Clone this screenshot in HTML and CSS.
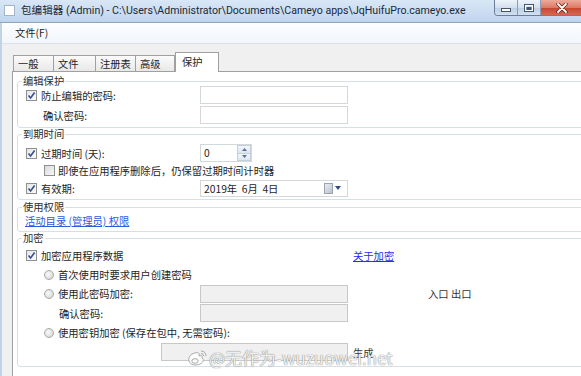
FILE: index.html
```html
<!DOCTYPE html>
<html lang="zh-CN">

<head>
    <meta charset="UTF-8">
    <meta name="viewport" content="width=device-width, initial-scale=1.0">
    <title>包编辑器</title>
    <link rel="stylesheet" href="styles.css">
</head>

<body>
    <div class="window">
        <div class="titlebar">
            <span class="app-icon"></span>
            <span class="title">包编辑器 (Admin) - C:\Users\Administrator\Documents\Cameyo apps\JqHuifuPro.cameyo.exe</span>
            <div class="caption-btns">
                <span class="cbtn min">
                    <svg width="10" height="4" viewBox="0 0 10 4"><rect x="0.5" y="0.5" width="9" height="3" fill="#fff" stroke="#44546b"/></svg>
                </span>
                <span class="cbtn max">
                    <svg width="10" height="8" viewBox="0 0 10 8"><rect x="0.5" y="0.5" width="9" height="7" fill="none" stroke="#44546b"/><rect x="1.5" y="1.5" width="7" height="5" fill="none" stroke="#fff"/><rect x="2.5" y="3" width="5" height="3" fill="#44546b"/></svg>
                </span>
                <span class="cbtn close">
                    <svg width="12" height="10" viewBox="0 0 12 10"><path d="M2 1 L10 9 M10 1 L2 9" stroke="#6b2418" stroke-width="3.4" stroke-linecap="round"/><path d="M2 1 L10 9 M10 1 L2 9" stroke="#fff" stroke-width="1.8" stroke-linecap="round"/></svg>
                </span>
            </div>
        </div>

        <div class="frame">
            <div class="menubar"><span class="menu-item">文件(F)</span></div>

            <div class="tabstrip">
                <span class="tab">一般</span>
                <span class="tab">文件</span>
                <span class="tab">注册表</span>
                <span class="tab">高级</span>
                <span class="tab active">保护</span>
            </div>

            <div class="panel">
                <!-- 编辑保护 -->
                <fieldset class="group g-edit">
                    <legend>编辑保护</legend>
                    <div class="rows">
                        <div class="row r20">
                            <label class="lbl in-check"><span class="check on"><svg width="9" height="9" viewBox="0 0 9 9"><path d="M1.5 4.5 L3.6 7 L7.6 1.5" fill="none" stroke="#3a4f86" stroke-width="1.6"/></svg></span>防止编辑的密码:</label>
                            <span class="field"></span>
                        </div>
                        <div class="row r20">
                            <label class="lbl in-sub">确认密码:</label>
                            <span class="field"></span>
                        </div>
                    </div>
                </fieldset>

                <!-- 到期时间 -->
                <fieldset class="group g-expire">
                    <legend>到期时间</legend>
                    <div class="rows">
                        <div class="row r18">
                            <label class="lbl in-check"><span class="check on"><svg width="9" height="9" viewBox="0 0 9 9"><path d="M1.5 4.5 L3.6 7 L7.6 1.5" fill="none" stroke="#3a4f86" stroke-width="1.6"/></svg></span>过期时间 (天):</label>
                            <span class="spin">
                                <span class="spin-val">0</span>
                                <span class="spin-btns">
                                    <span class="spin-btn"><svg width="5" height="3" viewBox="0 0 5 3"><path d="M0 3 L2.5 0 L5 3 Z" fill="#56739c"/></svg></span>
                                    <span class="spin-btn"><svg width="5" height="3" viewBox="0 0 5 3"><path d="M0 0 L2.5 3 L5 0 Z" fill="#56739c"/></svg></span>
                                </span>
                            </span>
                        </div>
                        <div class="row r17">
                            <label class="lbl in-sub2 wide"><span class="check"></span>即使在应用程序删除后，仍保留过期时间计时器</label>
                        </div>
                        <div class="row r18">
                            <label class="lbl in-check"><span class="check on"><svg width="9" height="9" viewBox="0 0 9 9"><path d="M1.5 4.5 L3.6 7 L7.6 1.5" fill="none" stroke="#3a4f86" stroke-width="1.6"/></svg></span>有效期:</label>
                            <span class="date">
                                <span class="date-val">2019年&nbsp;&nbsp;6月&nbsp;&nbsp;4日</span>
                                <span class="cal-icon"></span>
                                <svg class="cal-arrow" width="6" height="4" viewBox="0 0 6 4"><path d="M0 0 L6 0 L3 4 Z" fill="#2e4d7c"/></svg>
                            </span>
                        </div>
                    </div>
                </fieldset>

                <!-- 使用权限 -->
                <fieldset class="group g-perm">
                    <legend>使用权限</legend>
                    <div class="rows">
                        <div class="row r12">
                            <a class="link in-link wide" href="#">活动目录 (管理员) 权限</a>
                        </div>
                    </div>
                </fieldset>

                <!-- 加密 -->
                <fieldset class="group g-crypt">
                    <legend>加密</legend>
                    <div class="rows">
                        <div class="row r19">
                            <label class="lbl in-check"><span class="check on"><svg width="9" height="9" viewBox="0 0 9 9"><path d="M1.5 4.5 L3.6 7 L7.6 1.5" fill="none" stroke="#3a4f86" stroke-width="1.6"/></svg></span>加密应用程序数据</label>
                            <span></span>
                            <a class="aside link2" href="#">关于加密</a>
                        </div>
                        <div class="row r19">
                            <label class="lbl in-radio wide"><span class="radio"></span>首次使用时要求用户创建密码</label>
                        </div>
                        <div class="row r19">
                            <label class="lbl in-radio"><span class="radio"></span>使用此密码加密:</label>
                            <span class="field off"></span>
                            <span class="aside io">入口 出口</span>
                        </div>
                        <div class="row r20">
                            <label class="lbl in-radio-sub">确认密码:</label>
                            <span class="field off"></span>
                        </div>
                        <div class="row r19">
                            <label class="lbl in-radio wide"><span class="radio"></span>使用密钥加密 (保存在包中, 无需密码):</label>
                        </div>
                        <div class="row r20">
                            <span class="field off keybox"></span>
                            <span class="aside">生成</span>
                        </div>
                    </div>
                </fieldset>
            </div>
        </div>

        <div class="watermark">
            <svg width="20" height="18" viewBox="0 0 20 18">
                <path d="M8 4 C3 5 1 9 2 12 C3 16 9 17 13 15 C17 13 17 10 15 9 C16 7 15 6 12 7 C13 4 11 3 8 4 Z" fill="rgba(255,255,255,0.85)" stroke="#a8a8a8" stroke-width="1"/>
                <ellipse cx="8" cy="12" rx="3.2" ry="2.3" fill="none" stroke="#a8a8a8" stroke-width="1"/>
                <path d="M14 2 C17 2 19 4 19 7 M14 4.5 C15.5 4.5 16.5 5.5 16.5 7" fill="none" stroke="#a8a8a8" stroke-width="1"/>
            </svg>
            <span>@无作为-wuzuowei.net</span>
        </div>
    </div>
</body>

</html>
```

FILE: styles.css
```css
body {
    margin: 0;
    font-family: "Noto Sans CJK SC", "Noto Sans", sans-serif;
    font-size: 10.3px;
    color: #1e1e1e;
}

.window {
    position: relative;
    width: 581px;
    height: 376px;
    overflow: hidden;
    background: #f0f0f0;
}

/* title bar */
.titlebar {
    height: 22px;
    display: flex;
    align-items: flex-start;
    border-bottom: 1px solid #8fa3ba;
    background: linear-gradient(#d9e7f6, #bfd5ee);
}

.app-icon {
    flex-shrink: 0;
    width: 9px;
    height: 9px;
    margin: 5px 0 0 4px;
    background: #fff;
    border: 1px solid #a5b4c6;
}

.title {
    min-width: 0;
    overflow: hidden;
    margin: 2px 0 0 6px;
    font-family: Roboto, "Noto Sans CJK SC", sans-serif;
    font-size: 10.6px;
    line-height: 17px;
    color: #1b2838;
    white-space: nowrap;
}

.caption-btns {
    flex-shrink: 0;
    display: flex;
    height: 15px;
    margin-left: auto;
    margin-right: -3px;
    border: 1px solid #6c7e96;
    border-top: none;
    border-radius: 0 0 4px 4px;
    overflow: hidden;
}

.cbtn {
    display: flex;
    align-items: center;
    justify-content: center;
}

.cbtn.min,
.cbtn.max {
    background: linear-gradient(#edf3fa, #d3e0ee 50%, #bccee3 51%, #d2e0f0);
    border-right: 1px solid #8b9cb2;
}

.cbtn.min {
    width: 23px;
    align-items: flex-end;
    padding-bottom: 3px;
    box-sizing: border-box;
}

.cbtn.max {
    width: 22px;
}

.cbtn.close {
    width: 42px;
    background: linear-gradient(#eeaa9a, #dc7a66 50%, #c8442d 51%, #da6550);
}

/* frame below the title bar */
.frame {
    border-left: 2px solid #c1d3e7;
}

.menubar {
    height: 20px;
    border-bottom: 1px solid #dce2ea;
    background: linear-gradient(#fdfeff, #f2f5fa);
}

.menu-item {
    display: inline-block;
    padding-left: 13px;
    line-height: 20px;
}

/* tabs */
.tabstrip {
    height: 27px;
    margin-left: 10px;
    padding-left: 1px;
    display: grid;
    grid-template-columns: 41px 42px 40px 39px 44px;
    align-items: end;
    border-bottom: 1px solid #a0a0a0;
}

.tab {
    height: 15px;
    padding-left: 4px;
    line-height: 15px;
    border: 1px solid #a0a0a0;
    border-bottom: none;
    background: linear-gradient(#fbfbfb, #e8e8e8);
    white-space: nowrap;
}

.tab + .tab {
    border-left: none;
}

.tab.active {
    position: relative;
    z-index: 1;
    height: 19px;
    margin-bottom: -1px;
    padding-left: 6px;
    line-height: 18px;
    border-left: 1px solid #a0a0a0;
    background: #fff;
}

/* tab page */
.panel {
    min-height: 304px;
    margin-left: 10px;
    margin-right: -30px;
    padding: 3px 0 0 4px;
    box-sizing: border-box;
    border-left: 1px solid #a0a0a0;
    background: #fff;
}

.group {
    min-width: 0;
    margin: 0;
    padding: 0;
    border: 1px solid #d5dfe5;
    border-radius: 3px;
}

.group legend {
    margin-left: 4px;
    padding: 0 1px;
    line-height: 12px;
    color: #2c2c2c;
}

.g-edit .rows {
    margin-top: -2px;
}

.g-edit {
    padding-bottom: 2px;
}

.g-expire .rows {
    margin-top: 4px;
}

.g-expire {
    padding-bottom: 2px;
}

.g-perm {
    margin-top: 1px;
    padding-bottom: 4px;
}

.g-perm .rows {
    margin-top: 2px;
}

.g-crypt {
    padding-bottom: 4px;
}

.g-crypt .rows {
    margin-top: 2px;
}

.row {
    display: grid;
    grid-template-columns: 182px 148px auto;
    align-items: center;
}

.r12 { height: 12px; }
.r17 { height: 17px; }
.r18 { height: 18px; }
.r19 { height: 19px; }
.r20 { height: 20px; }

.lbl {
    display: flex;
    align-items: center;
    gap: 4px;
    white-space: nowrap;
}

.wide {
    grid-column: 1 / 4;
}

.in-check { padding-left: 8px; }
.in-sub { padding-left: 25px; }
.in-sub2 { padding-left: 26px; gap: 3px; }
.in-radio { padding-left: 26px; }
.in-radio-sub { padding-left: 41px; }
.in-link { padding-left: 7px; }

.check {
    width: 11px;
    height: 11px;
    box-sizing: border-box;
    display: inline-flex;
    align-items: center;
    justify-content: center;
    border: 1px solid #8e8f8f;
    background: linear-gradient(135deg, #d8dade, #f8f8f8);
}

.check.on {
    background: linear-gradient(135deg, #e4e6ea, #fbfbfb);
}

.radio {
    width: 10px;
    height: 10px;
    box-sizing: border-box;
    border-radius: 50%;
    border: 1px solid #a9a9a9;
    background: radial-gradient(circle at 40% 40%, #fafafa, #cfcfcf);
}

.field {
    height: 18px;
    box-sizing: border-box;
    border: 1px solid #d3d8dd;
    background: #fff;
}

.field.off {
    border-color: #c8c8c8;
    background: #f0f0f0;
}

.keybox {
    grid-column: 1 / 3;
    justify-self: end;
    width: 187px;
}

.aside {
    padding-left: 5px;
    white-space: nowrap;
    color: #333;
}

.aside.io {
    padding-left: 80px;
}

.link {
    line-height: 12px;
    color: #2f5ad9;
    text-decoration: underline;
    white-space: nowrap;
}

.link2 {
    color: #2a2af0;
    text-decoration: underline;
}

/* spinner and date picker */
.spin {
    width: 52px;
    height: 18px;
    box-sizing: border-box;
    display: flex;
    border: 1px solid #d3d8dd;
    background: #fff;
}

.spin-val {
    flex: 1;
    padding-left: 3px;
    line-height: 15px;
}

.spin-btns {
    width: 14px;
    display: flex;
    flex-direction: column;
}

.spin-btn {
    flex: 1;
    display: flex;
    align-items: center;
    justify-content: center;
    border: 1px solid #c5ced9;
    background: linear-gradient(#f4f7fb, #dde5ef);
}

.spin-btn + .spin-btn {
    border-top: none;
}

.date {
    width: 148px;
    height: 17px;
    box-sizing: border-box;
    display: flex;
    align-items: center;
    padding-left: 3px;
    border: 1px solid #d3d8dd;
    background: #fff;
}

.date-val {
    flex: 1;
    white-space: nowrap;
}

.cal-icon {
    width: 7px;
    height: 9px;
    margin-right: 2px;
    border: 1px solid #9aa3ae;
    background: linear-gradient(135deg, #e9edf2, #b9c2cd);
}

.cal-arrow {
    margin-right: 6px;
}

/* image watermark */
.watermark {
    position: absolute;
    left: 187px;
    top: 348px;
    display: flex;
    align-items: center;
    gap: 2px;
    font-size: 17px;
    line-height: 20px;
    color: rgba(255, 255, 255, 0.88);
    text-shadow: 0 0 1px #8a8a8a, 0 0 1px #8a8a8a;
    white-space: nowrap;
}
```
